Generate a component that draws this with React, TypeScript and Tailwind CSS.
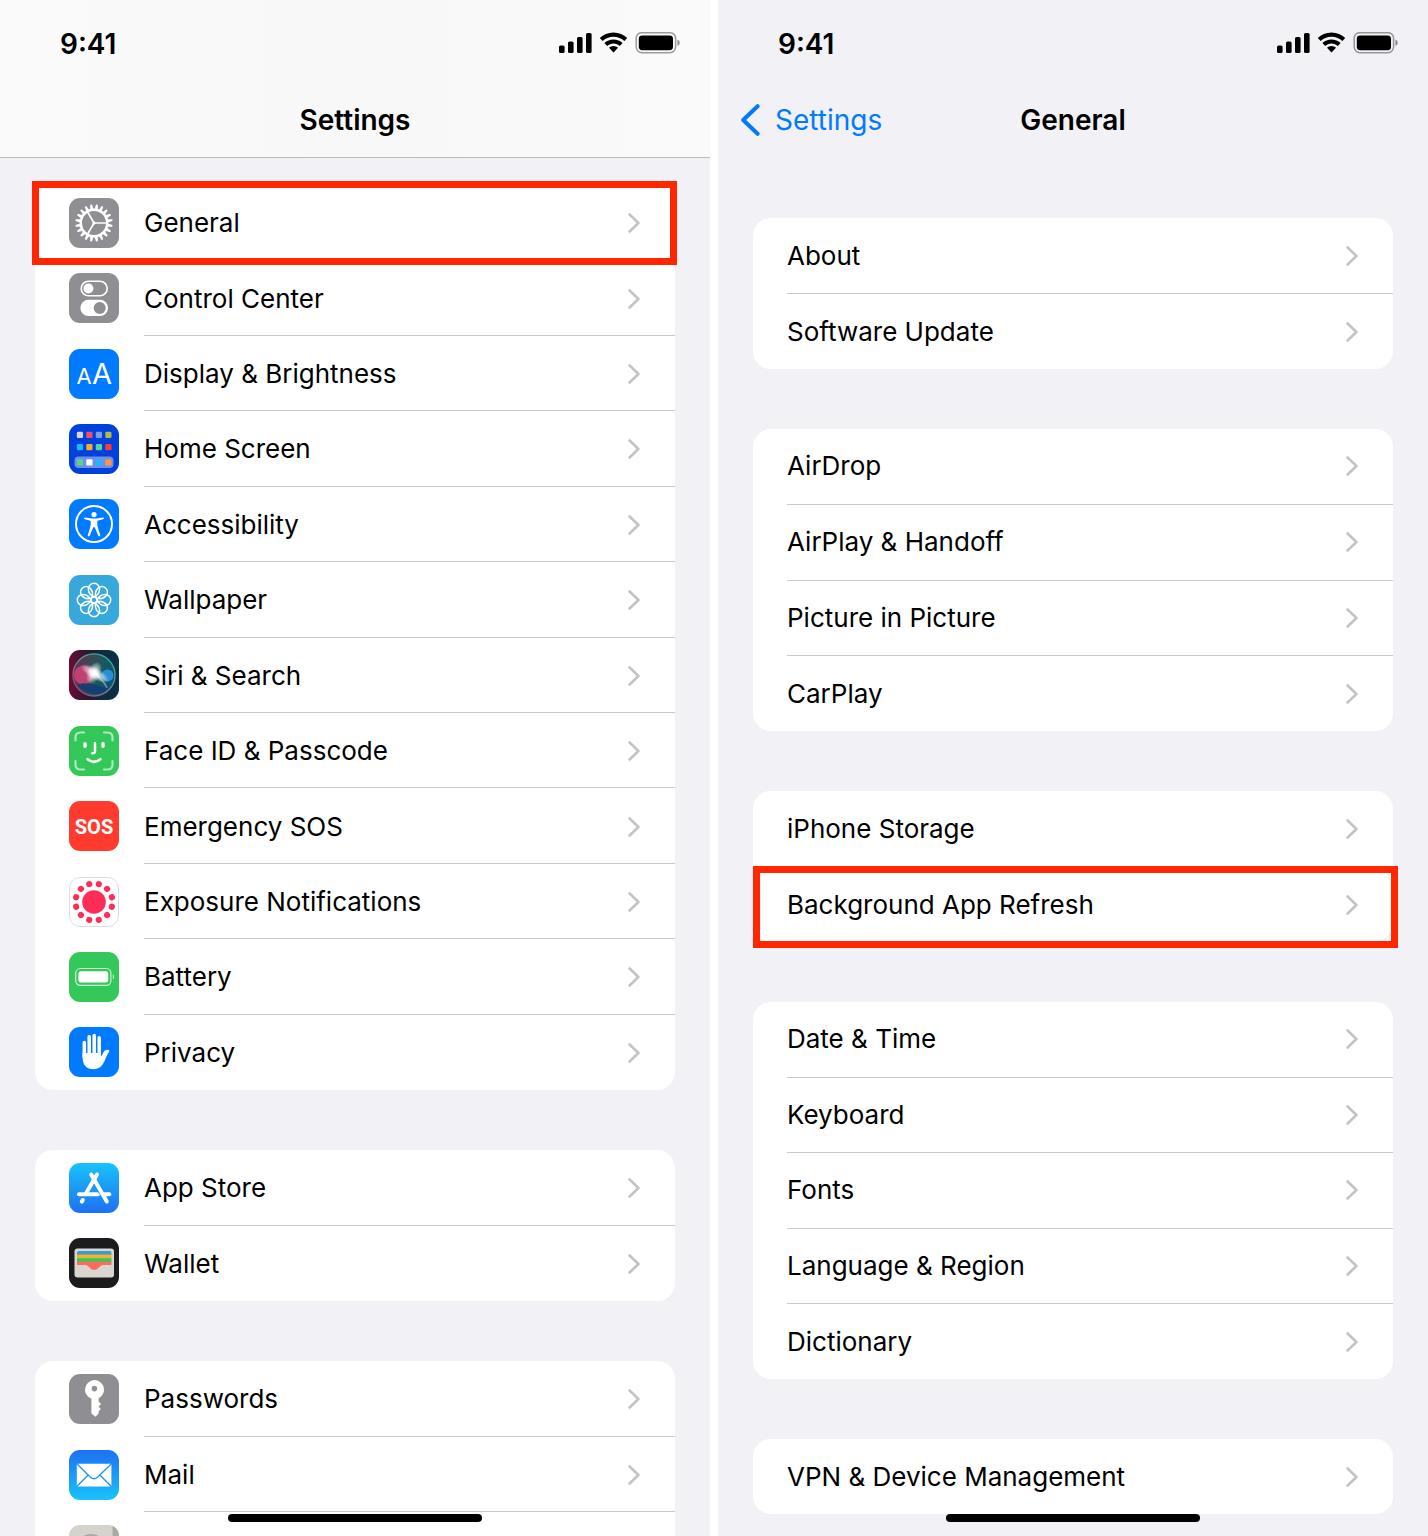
import type { ReactNode } from "react";

type Item = { label: string; icon?: ReactNode; highlight?: "wide" | "shifted"; peek?: boolean };

function Tile({ bg, children }: { bg: string; children?: ReactNode }) {
  return (
    <svg viewBox="0 0 50 50" className="size-[50px] shrink-0" aria-hidden="true">
      <defs>
        <linearGradient id="storeBlue" x1="0" y1="0" x2="0" y2="1">
          <stop offset="0" stopColor="#19c3fb" />
          <stop offset="1" stopColor="#1d70f2" />
        </linearGradient>
        <linearGradient id="mailBlue" x1="0" y1="0" x2="0" y2="1">
          <stop offset="0" stopColor="#1d70f2" />
          <stop offset="1" stopColor="#19c3fb" />
        </linearGradient>
        <linearGradient id="siriBase" x1="0" y1="0" x2="1" y2="0">
          <stop offset="0" stopColor="#6b0d33" />
          <stop offset="0.35" stopColor="#2c1730" />
          <stop offset="0.7" stopColor="#0d2c40" />
          <stop offset="1" stopColor="#0c3045" />
        </linearGradient>
        <radialGradient id="siriGlow">
          <stop offset="0" stopColor="#fff" />
          <stop offset="0.35" stopColor="#fff" stopOpacity="0.75" />
          <stop offset="1" stopColor="#fff" stopOpacity="0" />
        </radialGradient>
        <linearGradient id="siriOrb" x1="0" y1="0" x2="1" y2="0.4">
          <stop offset="0" stopColor="#7c3150" />
          <stop offset="0.4" stopColor="#4a5a62" />
          <stop offset="0.75" stopColor="#14706c" />
          <stop offset="1" stopColor="#0f5f8a" />
        </linearGradient>
        <linearGradient id="siriRing" x1="0" y1="1" x2="1" y2="0">
          <stop offset="0" stopColor="#b0365f" />
          <stop offset="0.5" stopColor="#6f8592" />
          <stop offset="1" stopColor="#23b39a" />
        </linearGradient>
        <clipPath id="tileShape">
          <rect width="50" height="50" rx="11" />
        </clipPath>
      </defs>
      <g clipPath="url(#tileShape)">
        <rect width="50" height="50" fill={bg} />
        {children}
      </g>
    </svg>
  );
}

const range = (n: number) => Array.from({ length: n }, (_, i) => i);

const gear = (
  <Tile bg="#8e8e93">
    <g stroke="#fff" fill="none">
      {range(20).map((i) => (
        <path key={i} d="M38.5 23.3 L43.6 24.1 V25.9 L38.5 26.7 Z" fill="#fff" stroke="none" transform={`rotate(${i * 18 + 9} 25 25)`} />
      ))}
      <circle cx="25" cy="25" r="13.2" strokeWidth="2.4" />
      {[0, 120, 240].map((a) => (
        <path key={a} d="M25 25 H38" strokeWidth="1.7" transform={`rotate(${a} 25 25)`} />
      ))}
      <circle cx="25" cy="25" r="1.2" fill="#fff" />
    </g>
  </Tile>
);

const toggles = (
  <Tile bg="#8e8e93">
    <rect x="12.2" y="8.2" width="26" height="14.6" rx="7.3" fill="none" stroke="#fff" strokeWidth="1.6" />
    <circle cx="19.4" cy="15.5" r="5" fill="#fff" />
    <rect x="11.4" y="26.8" width="27.6" height="16.2" rx="8.1" fill="#fff" />
    <circle cx="30.7" cy="34.9" r="6" fill="#8e8e93" />
  </Tile>
);

const display = (
  <Tile bg="#007aff">
    <g fill="#fff" fontFamily="Inter, sans-serif">
      <text x="7.5" y="35" fontSize="22">A</text>
      <text x="23" y="35" fontSize="29">A</text>
    </g>
  </Tile>
);

const homeColors = [
  ["#d5d5da", "#ff4b60", "#7e9be8", "#b3bd3c"],
  ["#20b4f8", "#f5b01f", "#55d3a0", "#ff3b30"],
  ["#55d884", "#ffffff", "#1fb7ff", "#ff9540"],
];
const home = (
  <Tile bg="#0040dd">
    <rect x="5.5" y="32.5" width="39" height="11.5" rx="4" fill="#6f8fe8" />
    {homeColors.map((row, r) =>
      row.map((c, i) => <rect key={`${r}-${i}`} x={7.8 + i * 9.5} y={[7.8, 20, 35.2][r]} width="6.2" height="6.2" rx="1.2" fill={c} />),
    )}
  </Tile>
);

const accessibility = (
  <Tile bg="#007aff">
    <circle cx="25" cy="25" r="18" fill="none" stroke="#fff" strokeWidth="2" />
    <circle cx="25" cy="15.6" r="2.6" fill="#fff" />
    <path d="M16.2 18.4 L22.5 19.6 H27.5 L33.8 18.4 C35.4 18.3 35.4 20 34 20.3 L28.4 21.7 C28 24.5 28.4 26.5 29 29 L31.2 36 C31.4 37.4 29.8 37.7 29.2 36.4 L25.7 28.3 H24.3 L20.8 36.4 C20.2 37.7 18.6 37.4 18.8 36 L21 29 C21.6 26.5 22 24.5 21.6 21.7 L16 20.3 C14.6 20 14.6 18.3 16.2 18.4 Z" fill="#fff" />
  </Tile>
);

const wallpaper = (
  <Tile bg="#36a8dc">
    <g fill="none" stroke="#fff" strokeWidth="1.5">
      {range(8).map((i) => (
        <path key={i} d="M25 22 C22 20.6 19.4 17.4 19.4 13.9 A5.6 5.6 0 0 1 30.6 13.9 C30.6 17.4 28 20.6 25 22 Z" transform={`rotate(${i * 45} 25 25)`} />
      ))}
      <circle cx="25" cy="25" r="3" />
    </g>
  </Tile>
);

const siri = (
  <Tile bg="url(#siriBase)">
    <circle cx="25" cy="25" r="20.5" fill="url(#siriOrb)" fillOpacity="0.7" />
    <circle cx="14.5" cy="25" r="9.5" fill="#d8447c" fillOpacity="0.8" />
    <circle cx="38.5" cy="25.5" r="6" fill="#2b9ae6" fillOpacity="0.85" />
    <path d="M8 35 C18 30 30 38 40 37 C34 46 18 47 8 35 Z" fill="#123a78" fillOpacity="0.8" />
    <circle cx="25" cy="25" r="21" fill="none" stroke="url(#siriRing)" strokeWidth="1.4" />
    <path d="M28 26 Q35 31 38 38" fill="none" stroke="#c9b5bd" strokeOpacity="0.6" strokeWidth="1.6" />
    <ellipse cx="26" cy="23.5" rx="16" ry="6" fill="url(#siriGlow)" transform="rotate(30 26 23.5)" />
    <ellipse cx="25" cy="23" rx="7" ry="12" fill="url(#siriGlow)" transform="rotate(24 25 23)" />
  </Tile>
);

const faceId = (
  <Tile bg="#34c759">
    <g fill="none" stroke="#fff" strokeLinecap="round">
      <path d="M6.5 14.5 V11.5 Q6.5 6.5 11.5 6.5 H15 M35 6.5 H38.5 Q43.5 6.5 43.5 11.5 V14.5 M43.5 35 V38.5 Q43.5 43.5 38.5 43.5 H35 M15 43.5 H11.5 Q6.5 43.5 6.5 38.5 V35" strokeWidth="2.2" strokeOpacity="0.6" />
      <path d="M16 17.6 V20.3 M34 17.6 V20.3" strokeWidth="3.4" />
      <path d="M26 17.2 V25 Q26 27.3 23.3 27.2" strokeWidth="2.5" />
      <path d="M18.6 33.2 Q25 38.4 31.4 33.2" strokeWidth="2.6" />
    </g>
  </Tile>
);

const sos = (
  <Tile bg="#ff3b30">
    <text x="25" y="33" textAnchor="middle" fontSize="20" fontWeight="700" fill="#fff" fontFamily="'Liberation Sans Narrow', Roboto, sans-serif">
      SOS
    </text>
  </Tile>
);

const exposure = (
  <Tile bg="#fff">
    <rect x="0.5" y="0.5" width="49" height="49" rx="10.5" fill="none" stroke="#dcdcde" />
    <circle cx="25" cy="25" r="11.8" fill="#ff2d55" />
    {range(12).map((i) => (
      <circle key={i} cx="43.5" cy="25" r="3.1" fill="#ff2d55" transform={`rotate(${i * 30 + 15} 25 25)`} />
    ))}
  </Tile>
);

const battery = (
  <Tile bg="#34c759">
    <rect x="6.7" y="16.5" width="35.2" height="16.8" rx="4.6" fill="none" stroke="#fff" strokeOpacity="0.75" strokeWidth="1.2" />
    <rect x="9.4" y="19.2" width="29.8" height="11.4" rx="2.4" fill="#fff" />
    <path d="M43.8 22 Q46.6 24.9 43.8 27.8 Z" fill="#fff" fillOpacity="0.75" />
  </Tile>
);

const privacy = (
  <Tile bg="#007aff">
    <g fill="none" stroke="#fff" strokeWidth="3.5" strokeLinecap="round">
      <path d="M15.3 15.5 V30 M20.2 9.8 V28 M25.2 8.6 V28 M30.2 10.8 V28" />
    </g>
    <path d="M13.55 26 H31.9 V29.5 C33.2 28.5 34.2 24.6 36 23.4 C37.6 22.3 40.6 22.6 40.3 24.2 C37.4 28 36.4 33.6 33.6 37.6 C31.6 40.8 28.6 42.2 24.6 42.2 C17.4 42.2 13.55 38 13.55 30 Z" fill="#fff" />
  </Tile>
);

const appStore = (
  <Tile bg="url(#storeBlue)">
    <g fill="none" stroke="#fff" strokeWidth="4" strokeLinecap="round">
      <path d="M10 31.2 H29" />
      <path d="M28 11.5 L17.2 30" />
      <path d="M13.8 37 L12.8 38.6" />
      <path d="M27 19.7 L33 30" stroke="#1f93f6" strokeWidth="6" strokeLinecap="butt" />
      <path d="M22.2 11.5 L37.8 38.4" />
      <path d="M35 31.2 H40.3" />
    </g>
  </Tile>
);

const wallet = (
  <Tile bg="#1c1c1e">
    <rect x="5.5" y="10.5" width="39.5" height="29" rx="3" fill="#d9d6d0" />
    <path d="M8 16 V15 Q8 13 10 13 H40.5 Q42.5 13 42.5 15 V17 H8 Z" fill="#3a9bd9" />
    <rect x="8" y="16.6" width="34.5" height="4" fill="#f8b31f" />
    <rect x="8" y="20.2" width="34.5" height="4" fill="#3cc45c" />
    <path d="M8 23.8 H42.5 V27 H34.5 C30.5 27 29.5 32 25.2 32 C21 32 20 27 16 27 H8 Z" fill="#ff6b5e" />
  </Tile>
);

const key = (
  <Tile bg="#8e8e93">
    <path
      fillRule="evenodd"
      fill="#fff"
      d="M25.4 6 A9.7 9.7 0 0 1 29.6 24.4 V27.6 L32 30 L29.6 32.6 L31.8 35 L29.6 37.4 V39.4 L26.4 42.8 L22.4 39.4 V24.8 A9.7 9.7 0 0 1 25.4 6 Z M25.4 11.8 A2.8 2.8 0 1 0 25.4 17.4 A2.8 2.8 0 1 0 25.4 11.8 Z"
    />
  </Tile>
);

const mail = (
  <Tile bg="url(#mailBlue)">
    <rect x="7.8" y="13.8" width="34.6" height="22.6" rx="1" fill="#fff" />
    <path d="M8 14 L21.5 27.2 Q25 30.4 28.5 27.2 L42.2 14 M8 36.2 L19 25.2 M42.2 36.2 L31 25.2" fill="none" stroke="#1f93f6" strokeWidth="1.3" />
  </Tile>
);

const contacts = (
  <Tile bg="#d6d3cc">
    <rect x="43.6" width="7" height="50" fill="#a9a8a4" />
    <circle cx="22" cy="25" r="16" fill="#a9a8a4" />
  </Tile>
);

const settingsGroups: { items: Item[]; size: string }[] = [
  {
    size: "min-h-[905px] rounded-b-[18px]",
    items: [
      { label: "General", icon: gear, highlight: "wide" },
      { label: "Control Center", icon: toggles },
      { label: "Display & Brightness", icon: display },
      { label: "Home Screen", icon: home },
      { label: "Accessibility", icon: accessibility },
      { label: "Wallpaper", icon: wallpaper },
      { label: "Siri & Search", icon: siri },
      { label: "Face ID & Passcode", icon: faceId },
      { label: "Emergency SOS", icon: sos },
      { label: "Exposure Notifications", icon: exposure },
      { label: "Battery", icon: battery },
      { label: "Privacy", icon: privacy },
    ],
  },
  {
    size: "min-h-[151px] rounded-[18px]",
    items: [
      { label: "App Store", icon: appStore },
      { label: "Wallet", icon: wallet },
    ],
  },
  {
    size: "min-h-[227px] rounded-[18px]",
    items: [
      { label: "Passwords", icon: key },
      { label: "Mail", icon: mail },
      { label: "Contacts", icon: contacts, peek: true },
    ],
  },
];

const generalGroups: { items: Item[]; size: string }[] = [
  { size: "min-h-[151px] rounded-[18px]", items: [{ label: "About" }, { label: "Software Update" }] },
  {
    size: "min-h-[302px] rounded-[18px]",
    items: [{ label: "AirDrop" }, { label: "AirPlay & Handoff" }, { label: "Picture in Picture" }, { label: "CarPlay" }],
  },
  {
    size: "min-h-[151px] rounded-[18px]",
    items: [{ label: "iPhone Storage" }, { label: "Background App Refresh", highlight: "shifted" }],
  },
  {
    size: "min-h-[377px] rounded-[18px]",
    items: [{ label: "Date & Time" }, { label: "Keyboard" }, { label: "Fonts" }, { label: "Language & Region" }, { label: "Dictionary" }],
  },
  { size: "min-h-[75px] rounded-[18px]", items: [{ label: "VPN & Device Management" }] },
];

const highlightPlace = {
  wide: "-left-[3px] -right-[2px] -top-1 -bottom-[5px]",
  shifted: "left-0 -right-[5px] -top-px -bottom-1.5",
};

function Row({ item, last }: { item: Item; last: boolean }) {
  return (
    <li className="relative flex flex-1">
      <a href={`#${encodeURIComponent(item.label)}`} aria-label={item.label} className="flex flex-1 items-center pl-[34px]">
        {item.icon && <span className="mr-[25px]">{item.icon}</span>}
        <span className={`flex flex-1 items-center justify-between self-stretch pr-[35px] ${item.icon ? "pt-0.5" : ""} ${last ? "" : "border-b border-[#c9c9cc]"}`}>
          {!item.peek && item.label}
          {!item.peek && (
            <svg viewBox="0 0 12 20" className="h-5 w-3" fill="none" stroke="#c4c4c7" strokeWidth="2.6" strokeLinecap="round" strokeLinejoin="round" aria-hidden="true">
              <path d="M1.6 1.5 L10.4 10 L1.6 18.5" />
            </svg>
          )}
        </span>
      </a>
      {item.highlight && <span className={`pointer-events-none absolute z-10 border-[7px] border-[#ff2600] ${highlightPlace[item.highlight]}`} />}
    </li>
  );
}

function Groups({ groups }: { groups: { items: Item[]; size: string }[] }) {
  return (
    <div className="flex flex-col gap-[60px] px-[35px] text-[26px] leading-9">
      {groups.map((g) => (
        <ul key={g.items[0].label} className={`flex flex-col bg-white ${g.size}`}>
          {g.items.map((item, i) => (
            <Row key={item.label} item={item} last={i === g.items.length - 1} />
          ))}
        </ul>
      ))}
    </div>
  );
}

function StatusBar() {
  return (
    <div className="flex h-[86px] items-center justify-between pr-[30px] pl-[60px]">
      <span className="pt-0.5 text-[28px] leading-9 font-semibold">9:41</span>
      <svg viewBox="0 0 121 22" className="h-[22px] w-[121px]" aria-hidden="true">
        <rect x="0" y="13.5" width="5.6" height="7.5" rx="1.6" />
        <rect x="9" y="9.5" width="5.6" height="11.5" rx="1.6" />
        <rect x="18" y="5" width="5.6" height="16" rx="1.6" />
        <rect x="27" y="1" width="5.6" height="20" rx="1.6" />
        <path d="M54.5 0.6 C60 0.6 64.8 2.7 68.2 6 L65.4 9 C62.6 6.4 58.8 4.7 54.5 4.7 C50.2 4.7 46.4 6.4 43.6 9 L40.8 6 C44.2 2.7 49 0.6 54.5 0.6 Z" />
        <path d="M54.5 7.4 C58 7.4 61.2 8.8 63.6 11 L60.8 13.9 C59.1 12.4 56.9 11.4 54.5 11.4 C52.1 11.4 49.9 12.4 48.2 13.9 L45.4 11 C47.8 8.8 51 7.4 54.5 7.4 Z" />
        <path d="M54.5 14 C56.2 14 57.8 14.7 59 15.8 L54.5 20.6 L50 15.8 C51.2 14.7 52.8 14 54.5 14 Z" />
        <rect x="77.2" y="0.7" width="39.4" height="20" rx="5.6" fill="none" stroke="#000" strokeOpacity="0.38" strokeWidth="1.5" />
        <rect x="79.8" y="3.4" width="34.2" height="14.8" rx="3.4" />
        <path d="M118.4 7.4 Q120.8 8.4 120.8 10.7 Q120.8 13 118.4 14 Z" fillOpacity="0.42" />
      </svg>
    </div>
  );
}

function Phone({ children }: { children: ReactNode }) {
  return (
    <section className="relative min-w-0 flex-1 overflow-hidden bg-[#f2f1f6]">
      {children}
      <div className="absolute bottom-[14px] left-1/2 z-20 h-2 w-[254px] -translate-x-1/2 rounded-full bg-black" />
    </section>
  );
}

export default function App() {
  return (
    <main className="flex h-screen gap-2 overflow-hidden bg-white font-['Inter',sans-serif] text-black">
      <Phone>
        <header className="border-b border-[#bdbdc0] bg-linear-to-r from-[#fafafa] via-[#f8f8f9] to-[#fafafa] pb-[3px]">
          <StatusBar />
          <div className="flex h-17 items-center justify-center">
            <h1 className="text-[28px] leading-9 font-semibold">Settings</h1>
          </div>
        </header>
        <div className="pt-[27px]">
          <Groups groups={settingsGroups} />
        </div>
      </Phone>
      <Phone>
        <header>
          <StatusBar />
          <div className="grid h-17 grid-cols-[1fr_auto_1fr] items-center px-[22px] text-[28px] leading-9">
            <a href="#settings" className="flex items-center gap-[15px] text-[#007aff]">
              <svg viewBox="0 0 20 32" className="h-8 w-5" fill="none" stroke="currentColor" strokeWidth="4" strokeLinecap="round" strokeLinejoin="round" aria-hidden="true">
                <path d="M17.6 2.2 L3.2 16 L17.6 29.8" />
              </svg>
              Settings
            </a>
            <h1 className="font-semibold">General</h1>
          </div>
        </header>
        <div className="pt-16">
          <Groups groups={generalGroups} />
        </div>
      </Phone>
    </main>
  );
}
